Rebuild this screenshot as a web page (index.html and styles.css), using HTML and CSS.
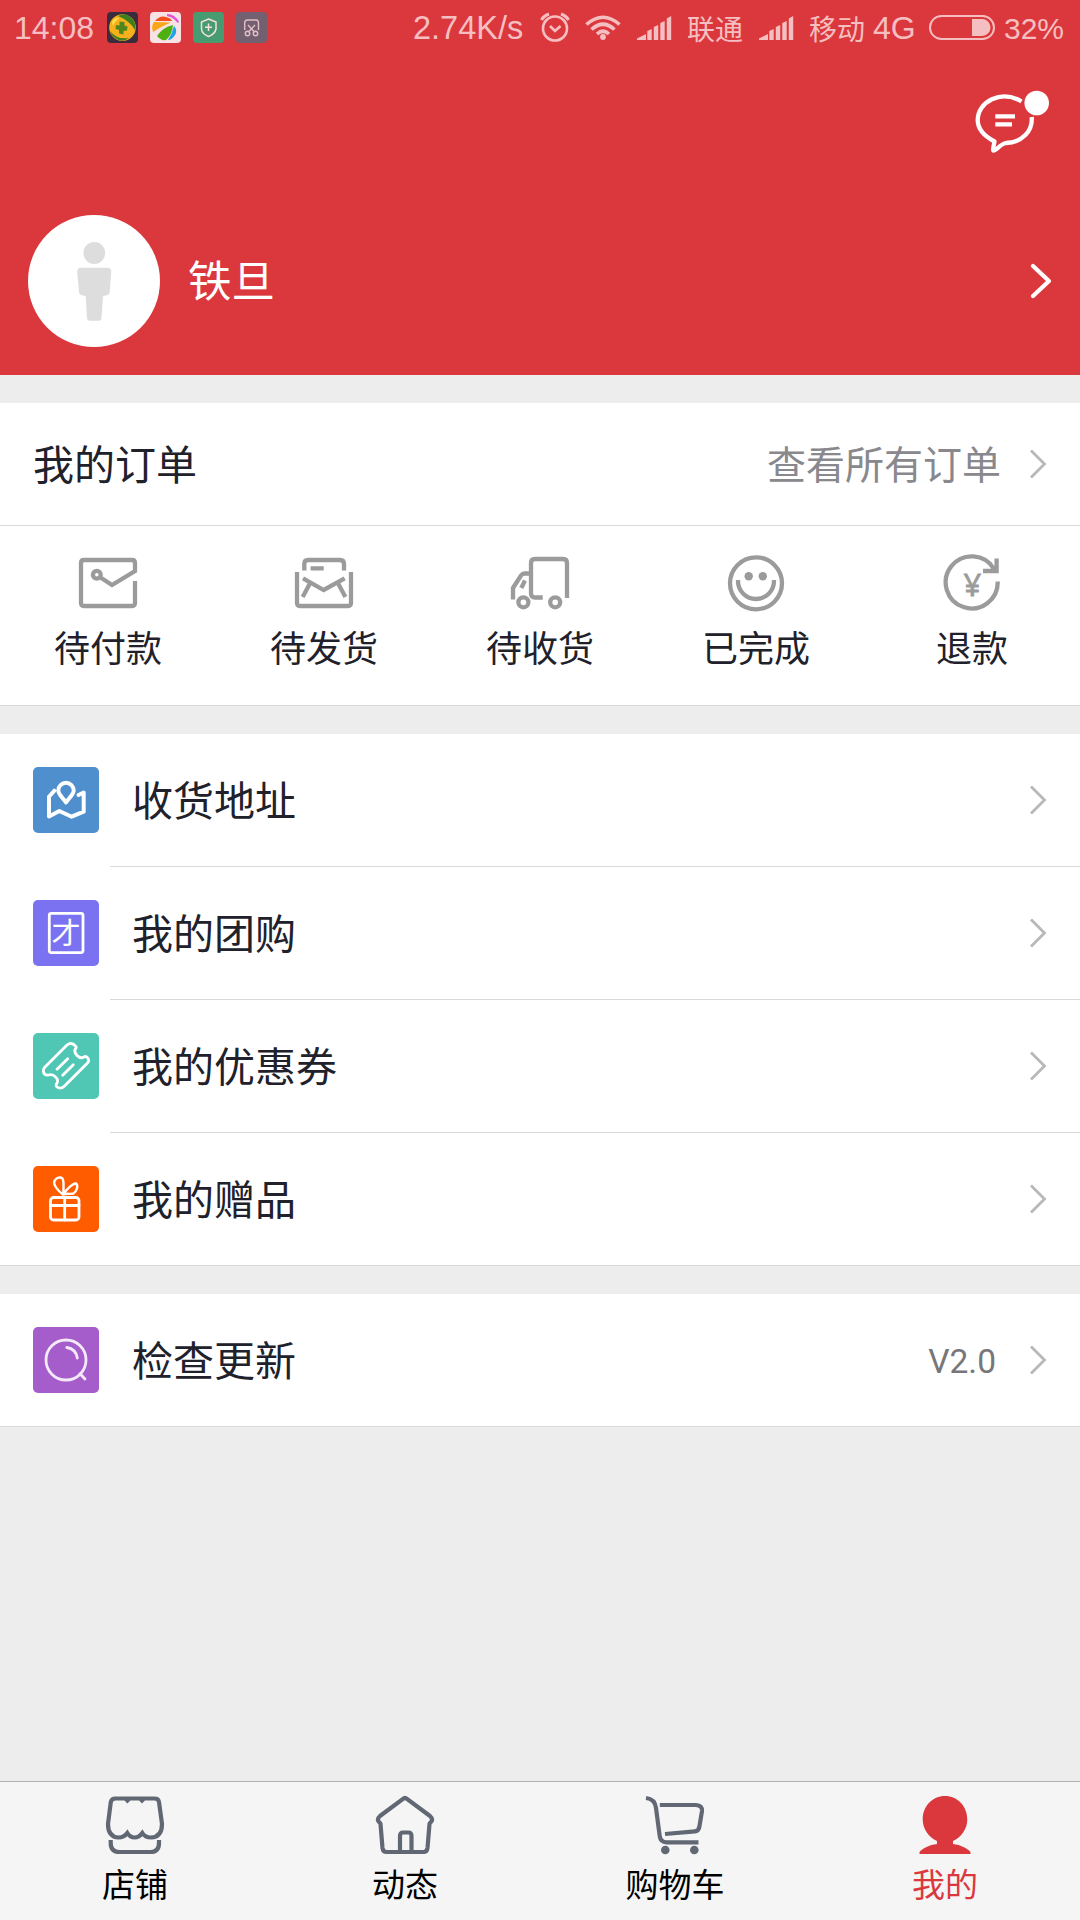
FILE: index.html
```html
<!DOCTYPE html>
<html lang="zh-CN">
<head>
<meta charset="utf-8">
<title>我的</title>
<link rel="stylesheet" href="styles.css">
</head>
<body>
<div class="app">
  <header class="header">
    <div class="status">
      <span class="time">14:08</span>
      <div class="apps">
        <svg viewBox="0 0 31 31"><rect width="31" height="31" rx="4" fill="#3a2b3d"/><circle cx="15.500" cy="15.500" r="13.300" fill="#f5b01c"/><path d="M11 4Q20-1 27 9Q29 13 28 18Q23 9 11 4ZM3 19Q10 28 22 26Q15 31 8 26Q4 23 3 19Z" fill="#3d7e1f"/><path d="M5 10Q8 5 12 6Q8 9 6 14Z" fill="#ffdf4a"/><path d="M12.500 9.500l5 .5v3.500l3 1-.5 4-3.500 .5v3.500l-4.500-1v-3.500l-3.500-1 .5-4 3.500 .5z" fill="#52851c"/></svg>
        <svg viewBox="0 0 31 31"><rect width="31" height="31" rx="4" fill="#f9e2e3"/><path d="M5 9Q10 3 16 5Q21 6 22 9Z" fill="#f4501c"/><path d="M17 2Q25 2 29 10Q28 12 25 8Q22 5 17 4Z" fill="#e252d8"/><path d="M3 20Q1 14 4 10L21 10.500Q14 13 3 20Z" fill="#faa619"/><path d="M7 24Q13 15 23 13Q22 23 16 28Q11 29 7 24Z" fill="#4eaf10"/><path d="M24 14Q28 18 25 23Q22 28 18 28Q22 22 24 14Z" fill="#1fa5e8"/></svg>
        <svg viewBox="0 0 31 31"><rect width="31" height="31" rx="4" fill="#479b70"/><path d="M15.500 7L23 10V17Q22 22 15.500 24.500Q9 22 8.500 17V10ZM15.500 11.500V19M12 15.300H19" fill="none" stroke="#f6dfdd" stroke-width="1.500"/></svg>
        <svg viewBox="0 0 31 31"><rect width="31" height="31" rx="4" fill="#725f70"/><g fill="none" stroke="#e5bfc6" stroke-width="1.400"><path d="M8.700 18V11Q8.700 8 11.500 8H20Q22.500 8 22.500 11V18M12 13L18.500 20M19 13L12.500 20"/><circle cx="11.500" cy="21.500" r="2.200"/><circle cx="19.500" cy="21.500" r="2.200"/></g></svg>
      </div>
      <span class="speed">2.74K/s</span>
      <svg class="alarm" viewBox="0 0 30 30" fill="none" stroke="currentColor"><circle cx="15" cy="16.500" r="12" stroke-width="2.600"/><path d="M10 14L15 19L20.500 14" stroke-width="2.600"/><path d="M1.500 8Q3.500 4 9 2M28.500 8Q26.500 4 21 2" stroke-width="3"/></svg>
      <svg class="wifi" viewBox="0 0 36 27" fill="none" stroke="currentColor" stroke-width="3.600"><path d="M1.500 10.500Q18-4 34.500 10.500M6.500 15.500Q18 5 29.500 15.500M12 20Q18 14.500 24 20"/><circle cx="18" cy="23" r="2.900" fill="currentColor" stroke="none"/></svg>
      <svg class="signal" viewBox="0 0 35 24" fill="currentColor"><path d="M0 24V22.500L9 18V24ZM10.300 24V15L14.700 13V24ZM16.800 24V11L21.200 9V24ZM23.300 24V7L27.700 5V24ZM29.800 24V2.500L34.200 0V24Z"/></svg>
      <span class="carrier">联通</span>
      <svg class="signal" viewBox="0 0 35 24" fill="currentColor"><path d="M0 24V22.500L9 18V24ZM10.300 24V15L14.700 13V24ZM16.800 24V11L21.200 9V24ZM23.300 24V7L27.700 5V24ZM29.800 24V2.500L34.200 0V24Z"/></svg>
      <span class="carrier carrier-b">移动</span>
      <span class="net">4G</span>
      <svg class="battery" viewBox="0 0 66 25"><rect x="1" y="1" width="64" height="23" rx="11.500" fill="none" stroke="currentColor" stroke-width="2"/><path d="M43 4H53A8.500 8.500 0 0 1 53 21H43Z" fill="currentColor"/></svg>
      <span class="percent">32%</span>
    </div>
    <div class="toolbar">
      <svg class="chat" viewBox="0 0 80 70" fill="none" stroke="#fff" stroke-width="4.300"><path d="M51.500 16.500C31 4 7.700 17 7.700 35C7.700 44 15 51.500 24.500 56.500C24 60 22.500 64 23.300 65.500C25.500 66.500 30 59 36 58C52 57.500 63 46 61.700 32" stroke-linejoin="round"/><path d="M25.300 31.300H45M25.300 39.300H42"/><circle cx="66.700" cy="18" r="12.300" fill="#fff" stroke="none"/></svg>
    </div>
    <div class="profile">
      <svg class="avatar" viewBox="0 0 132 132"><circle cx="66" cy="66" r="66" fill="#fff"/><g fill="#ddd"><circle cx="66.300" cy="38" r="10.900"/><path d="M53 52.700H79Q83.500 52.700 83.200 57L81.700 77Q81.500 80 78.500 80.300L75 81.300L73.500 103Q73.300 105.700 71 105.700H61.500Q59.200 105.700 59 103L57.700 81.300L54.500 80.300Q51.300 80 51 77L49.200 57Q49 52.700 53 52.700Z"/></g></svg>
      <span class="name">铁旦</span>
      <svg class="go" viewBox="0 0 22 36" fill="none" stroke="#fff" stroke-width="4.200" stroke-linecap="round" stroke-linejoin="round"><path d="M3 3L19 18L3 33"/></svg>
    </div>
  </header>

  <main class="content">
    <section class="card">
      <div class="orders-head">
        <span class="title">我的订单</span>
        <span class="all">查看所有订单</span>
        <svg class="chevron" viewBox="0 0 18 30"><path d="M2 1.500L15.500 15L2 28.500"/></svg>
      </div>
      <div class="orders">
        <div class="order">
          <svg viewBox="0 0 60 60"><path d="M57 28V50Q57 53 54 53H6Q3 53 3 50V10Q3 7 6 7H54Q57 7 57 10V18L34 32L22.500 24.500"/><circle cx="18.800" cy="21.700" r="3.900"/></svg>
          <span>待付款</span>
        </div>
        <div class="order">
          <svg viewBox="0 0 60 60"><path d="M3 19V50Q3 53 6 53H54Q57 53 57 50V19M10.300 17.500V11Q10.300 7 14 7H46Q50 7 50 11V17.500M16.600 15.300H29.700M9 25.300L29.700 37L50.700 25.300M16 30.300L8.700 44M44 30.300L51.400 44"/></svg>
          <span>待发货</span>
        </div>
        <div class="order">
          <svg viewBox="0 0 60 60"><path d="M3 46.500V35L11 22.500Q12.500 20.500 14.500 20.500H20M15 27.500L11.300 35M57 45V10Q57 6 53 6H25Q21 6 21 10V40.500Q21 44.500 25 44.500H32.700"/><circle cx="13.400" cy="49.300" r="5"/><circle cx="45.200" cy="49.300" r="5"/></svg>
          <span>待收货</span>
        </div>
        <div class="order">
          <svg viewBox="0 0 60 60"><circle cx="30" cy="30.300" r="26"/><path d="M12 27V28A18 18 0 0 0 48 28V27"/><g fill="#9b9b9b" stroke="none"><circle cx="22.700" cy="23.300" r="4.200"/><circle cx="36.800" cy="23.300" r="4.200"/></g></svg>
          <span>已完成</span>
        </div>
        <div class="order">
          <svg viewBox="0 0 60 60"><path d="M55.700 28.500A26 26 0 1 1 52 16M54.600 5.500V18H41" /><text class="yen" x="30.300" y="42.500">¥</text></svg>
          <span>退款</span>
        </div>
      </div>
    </section>

    <section class="card menu">
      <div class="item">
        <svg class="tile address" viewBox="0 0 66 66"><path d="M33 35.500C30 31 25.300 27.500 25.300 23.500A7.700 7.700 0 0 1 40.700 23.500C40.700 27.500 36 31 33 35.500ZM21.300 23.700L16 29.700V49.500L26.300 44L38.700 49.700L50.700 44.700V25.500L45.500 28"/></svg>
        <div class="line"><span>收货地址</span><svg class="chevron" viewBox="0 0 18 30"><path d="M2 1.500L15.500 15L2 28.500"/></svg></div>
      </div>
      <div class="item">
        <svg class="tile group" viewBox="0 0 66 66"><rect x="16.300" y="13.300" width="33.700" height="39.300" rx="2"/><text class="glyph" x="33" y="43.500">才</text></svg>
        <div class="line"><span>我的团购</span><svg class="chevron" viewBox="0 0 18 30"><path d="M2 1.500L15.500 15L2 28.500"/></svg></div>
      </div>
      <div class="item">
        <svg class="tile coupon" viewBox="0 0 66 66"><path d="M11.500 34.500L34 12Q38.500 8.500 42.500 13Q44 14.500 42 16.500Q41 19 44 22.500Q47.500 26 51 24Q53 22.500 55 25.500Q56.500 28 54.500 30L31.500 53Q27.500 57 23.500 53.500Q22.500 52.500 24 50Q26 47 22 43.500Q19 41 15.500 42Q11 42.500 10.300 38Q10.500 35.500 11.500 34.500ZM34.700 25.700L24 36.300M40.300 31.700L29.700 42.300"/></svg>
        <div class="line"><span>我的优惠券</span><svg class="chevron" viewBox="0 0 18 30"><path d="M2 1.500L15.500 15L2 28.500"/></svg></div>
      </div>
      <div class="item">
        <svg class="tile gift" viewBox="0 0 66 66"><rect x="17.500" y="31.500" width="28.500" height="22.500" rx="3"/><path d="M31.700 31.500V54M17.500 39.500H46"/><path d="M30 28.500C25 25 20 19 21.500 15C23 11.500 27.500 10.500 29.500 12.500C31.500 16 30 22 30.500 28.500C34 22 40 17.500 43 17.500C46 20 43 26 40.500 27.500C37 28.500 33.500 27 30.500 28.500" stroke-width="2.400"/></svg>
        <div class="line"><span>我的赠品</span><svg class="chevron" viewBox="0 0 18 30"><path d="M2 1.500L15.500 15L2 28.500"/></svg></div>
      </div>
    </section>

    <section class="card menu">
      <div class="item">
        <svg class="tile update" viewBox="0 0 66 66"><circle cx="33" cy="33" r="20"/><path d="M47 46.700L52 52M33.800 20.500Q43 22 44.300 31"/></svg>
        <div class="line"><span>检查更新</span><span class="version">V2.0</span><svg class="chevron" viewBox="0 0 18 30"><path d="M2 1.500L15.500 15L2 28.500"/></svg></div>
      </div>
    </section>
  </main>

  <nav class="tabs">
    <div class="tab">
      <svg viewBox="0 0 60 60"><path d="M10.500 3.500H49.500Q53.500 3.500 54 7L57 29Q57 42 46 42.500Q40 42.500 37.300 38Q34 42.500 29.800 42.500Q25 42.500 22.300 38Q19 42.500 13.500 42.500Q3 42 3 29L5.800 7Q6.500 3.500 10.500 3.500ZM20.500 3.500L22.400 5.500L24.500 3.500M35 3.500L37 5.500L39 3.500M5.700 45V48Q5.700 57 14.500 57H45.500Q54 57 54 48V45"/></svg>
      <span>店铺</span>
    </div>
    <div class="tab">
      <svg viewBox="0 0 60 60"><path d="M28 4Q30 2 32 4L55 21Q58.500 24 56 27Q54.500 28 54.500 29L52.500 53Q52 57 48.500 57H11.500Q8 57 7.500 53L5.500 29Q5.500 28 4 27Q1.500 24 5 21ZM25 57V41Q25 37.500 28 37.500H33.500Q36.500 37.500 36.500 41V57"/></svg>
      <span>动态</span>
    </div>
    <div class="tab">
      <svg viewBox="0 0 60 60"><path d="M1 3Q10 4 11 13L14.700 41Q15.500 47.300 21.500 47.300H53.500M14.800 10H51Q57.500 10.500 57 16L54.300 32Q53.500 36 50 36.300L20 39"/><g fill="#626873" stroke="none"><circle cx="20.300" cy="55" r="4.300"/><circle cx="49.300" cy="55" r="4.300"/></g></svg>
      <span>购物车</span>
    </div>
    <div class="tab active">
      <svg viewBox="0 0 60 60"><path d="M30 1C42.500 1 52.300 11 52.300 24.500C52.300 34 46 42.500 38 46V49C46 50 52 53 55.500 57V59H4.500V57C8 53 14 50 22 49V46C14 42.500 7.700 34 7.700 24.500C7.700 11 17.500 1 30 1Z" fill="#db383d" stroke="none"/></svg>
      <span>我的</span>
    </div>
  </nav>
</div>
</body>
</html>
```
FILE: styles.css
```css
* { box-sizing: border-box; }
body {
  margin: 0;
  background: #ededed;
  font-family: "Noto Sans CJK SC", sans-serif;
  color: #21212b;
}
svg { display: block; flex: none; }
span { white-space: nowrap; }
.app {
  width: 1080px;
  height: 1920px;
  display: flex;
  flex-direction: column;
}

/* header */
.header {
  height: 375px;
  background: #db383d;
  color: #fff;
}
.status {
  height: 57px;
  padding-left: 14px;
  display: flex;
  align-items: center;
  color: #f5bfc1;
  font: 32px/57px "Liberation Sans", sans-serif;
}
.time { width: 93px; }
.apps { display: flex; gap: 12px; }
.apps svg { width: 31px; height: 31px; margin-bottom: 2px; }
.speed { width: 127px; margin-left: 146px; font-size: 32.500px; }
.alarm { width: 30px; height: 30px; margin-bottom: 3px; }
.wifi { width: 36px; height: 27px; margin: 0 16px 3px 15px; }
.signal { width: 35px; height: 24px; margin-bottom: 1px; }
.carrier {
  width: 72px;
  margin-left: 15px;
  padding-bottom: 1px;
  font: 28px/56px "Noto Sans CJK SC", sans-serif;
}
.carrier-b { width: 64px; }
.net { width: 56px; }
.battery { width: 66px; height: 25px; margin-bottom: 2px; }
.percent { margin-left: 9px; font-size: 30px; }
.toolbar {
  height: 98px;
  padding: 28px 30px 0 0;
  display: flex;
  justify-content: flex-end;
}
.chat { width: 80px; height: 70px; }
.profile {
  height: 220px;
  padding: 60px 28px 0 28px;
  display: flex;
  align-items: flex-start;
}
.avatar { width: 132px; height: 132px; }
.name {
  flex: 1;
  margin-left: 28px;
  font-size: 43.500px;
  line-height: 128px;
}
.go { width: 22px; height: 36px; margin-top: 48px; }

/* cards */
.content { flex: 1; padding-top: 28px; }
.card {
  margin-bottom: 28px;
  background: #fff;
  border-bottom: 1px solid #d9d9d9;
}
.chevron {
  width: 18px;
  height: 30px;
  fill: none;
  stroke: #b8b8b8;
  stroke-width: 2.800;
}
.orders-head {
  height: 123px;
  padding: 0 33px;
  display: flex;
  align-items: center;
  border-bottom: 1px solid #d9d9d9;
  line-height: 118px;
}
.orders-head span { padding-bottom: 4px; }
.title { flex: 1; font-size: 41px; }
.all { margin-right: 28px; font-size: 39px; color: #88888d; }
.orders {
  height: 179px;
  padding-top: 27px;
  display: grid;
  grid-template-columns: repeat(5, 1fr);
}
.order {
  display: flex;
  flex-direction: column;
  align-items: center;
  font-size: 36px;
  line-height: 66px;
}
.order svg {
  width: 60px;
  height: 60px;
  fill: none;
  stroke: #9b9b9b;
  stroke-width: 4.300;
}
.order .yen {
  fill: #9b9b9b;
  stroke: #9b9b9b;
  stroke-width: 0.800;
  font: 31px "Noto Sans", sans-serif;
  text-anchor: middle;
}

.item {
  height: 133px;
  padding-left: 33px;
  display: flex;
  align-items: center;
}
.item:last-child { height: 132px; }
.tile {
  width: 66px;
  height: 66px;
  border-radius: 5px;
  fill: none;
  stroke: #fff;
  stroke-width: 2.800;
  stroke-linecap: round;
  stroke-linejoin: round;
}
.item:not(:last-child) .tile { margin-bottom: 1px; }
.address { background: #508fcd; stroke-width: 4; }
.group { background: #7b72f1; }
.coupon { background: #4fc7b4; }
.gift { background: #ff5c00; }
.update { background: #a55dcb; stroke: #f5e9f9; }
.glyph {
  fill: #fff;
  stroke: none;
  font: 29px "Noto Sans CJK SC", sans-serif;
  text-anchor: middle;
}
.line {
  flex: 1;
  height: 100%;
  margin-left: 11px;
  padding: 0 33px 0 22px;
  display: flex;
  align-items: center;
  border-bottom: 1px solid #d9d9d9;
  font-size: 41px;
  line-height: 120px;
}
.line > :first-child { flex: 1; padding-bottom: 4px; }
.item:last-child .line { border-bottom: 0; }
.line .version {
  margin-right: 33px;
  padding-top: 2px;
  color: #77777a;
  font: 33.500px "Roboto", sans-serif;
}

/* bottom tabs */
.tabs {
  height: 139px;
  padding-top: 13px;
  display: grid;
  grid-template-columns: repeat(4, 1fr);
  background: #f5f5f5;
  border-top: 1px solid #b0b3b3;
  color: #000;
}
.tab {
  display: flex;
  flex-direction: column;
  align-items: center;
  font-size: 33px;
  line-height: 56px;
}
.tab svg {
  width: 60px;
  height: 60px;
  fill: none;
  stroke: #626873;
  stroke-width: 4.200;
}
.active { color: #db383d; }
```
